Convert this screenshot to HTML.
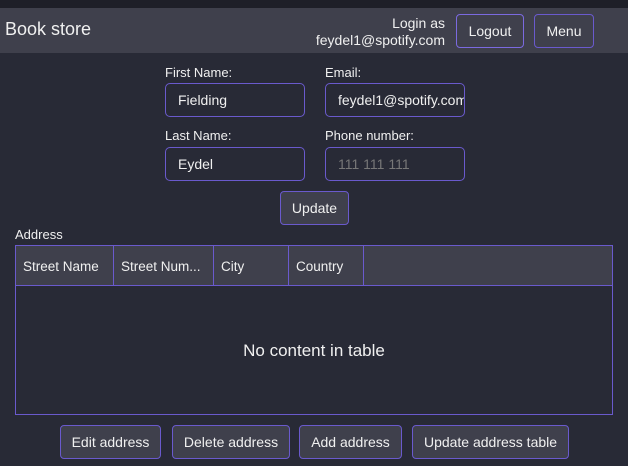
<!DOCTYPE html><html><head><style>
body{margin:0;width:628px;height:466px;background:#282a36;font-family:"Liberation Sans",sans-serif;color:#f0f0f0;position:relative;overflow:hidden;font-size:13px}
.a{position:absolute}
.top{left:0;top:0;width:628px;height:8px;background:#1e1f28}
.hd{left:0;top:8px;width:628px;height:45px;background:#3f404c}
.btn{position:absolute;background:#3f404c;border:1px solid #6a5acd;border-radius:4px;box-sizing:border-box;display:flex;align-items:center;justify-content:center;font-size:14px;color:#f0f0f0}
.in{position:absolute;background:#282a36;border:1px solid #6a5acd;border-radius:5px;box-sizing:border-box;padding-left:12px;display:flex;align-items:center;font-size:14px;overflow:hidden;white-space:nowrap;width:140px;height:34px}
.th{position:absolute;top:246px;height:40px;border-right:1px solid #6a5acd;box-sizing:border-box;padding-left:7px;display:flex;align-items:center;font-size:13.5px}
</style></head><body>
<div class="a top"></div><div class="a hd"></div>
<div class="a" style="left:5px;top:19px;font-size:18px">Book store</div>
<div class="a" style="right:183px;top:15px;text-align:right;font-size:14px;line-height:17px">Login as<br>feydel1@spotify.com</div>
<div class="btn" style="left:456px;top:14px;width:68px;height:34px;border-color:#7b6ae0">Logout</div>
<div class="btn" style="left:534px;top:14px;width:60px;height:34px">Menu</div>
<div class="a" style="left:165px;top:65px">First Name:</div>
<div class="a" style="left:325px;top:65px">Email:</div>
<div class="in" style="left:165px;top:83px">Fielding</div>
<div class="in" style="left:325px;top:83px">feydel1@spotify.com</div>
<div class="a" style="left:165px;top:128px">Last Name:</div>
<div class="a" style="left:325px;top:128px">Phone number:</div>
<div class="in" style="left:165px;top:147px">Eydel</div>
<div class="in" style="left:325px;top:147px;color:#777">111 111 111</div>
<div class="btn" style="left:280px;top:191px;width:69px;height:34px">Update</div>
<div class="a" style="left:15px;top:227px">Address</div>
<div class="a" style="left:15px;top:245px;width:598px;height:170px;border:1px solid #6a5acd;box-sizing:border-box"></div>
<div class="a" style="left:16px;top:246px;width:596px;height:40px;background:#3f404c;border-bottom:1px solid #6a5acd;box-sizing:border-box"></div>
<div class="th" style="left:16px;width:98px">Street Name</div>
<div class="th" style="left:114px;width:100px">Street Num...</div>
<div class="th" style="left:214px;width:75px">City</div>
<div class="th" style="left:289px;width:75px">Country</div>
<div class="a" style="left:0;width:628px;top:341px;text-align:center;font-size:17px">No content in table</div>
<div class="btn" style="left:60px;top:425px;width:101px;height:34px">Edit address</div>
<div class="btn" style="left:172px;top:425px;width:118px;height:34px">Delete address</div>
<div class="btn" style="left:299px;top:425px;width:103px;height:34px">Add address</div>
<div class="btn" style="left:412px;top:425px;width:157px;height:34px">Update address table</div>
</body></html>
